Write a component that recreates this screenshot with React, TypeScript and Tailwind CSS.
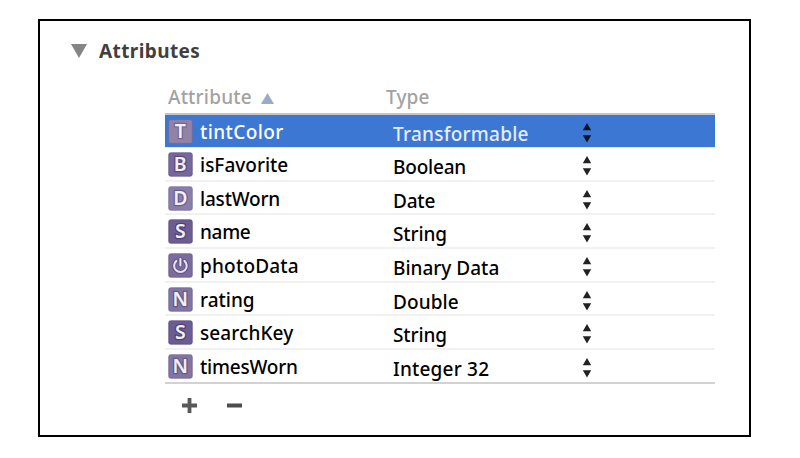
type Row = {
  letter: string;
  name: string;
  type: string;
  tile: string;
  edge: string;
  nameTracking: string;
  typeTracking: string;
};

const rows: Row[] = [
  { letter: "T", name: "tintColor", type: "Transformable", tile: "#9283a6", edge: "#75678f", nameTracking: "tracking-[0.4px]", typeTracking: "tracking-[0.25px]" },
  { letter: "B", name: "isFavorite", type: "Boolean", tile: "#75689a", edge: "#594b80", nameTracking: "tracking-[0px]", typeTracking: "tracking-[-0.2px]" },
  { letter: "D", name: "lastWorn", type: "Date", tile: "#8a7fa8", edge: "#6b5e8e", nameTracking: "tracking-[-0.2px]", typeTracking: "tracking-[-0.2px]" },
  { letter: "S", name: "name", type: "String", tile: "#6b5d91", edge: "#50427a", nameTracking: "tracking-[-0.3px]", typeTracking: "tracking-[-0.1px]" },
  { letter: "", name: "photoData", type: "Binary Data", tile: "#7a6c9b", edge: "#5f5186", nameTracking: "tracking-[0.2px]", typeTracking: "tracking-[0px]" },
  { letter: "N", name: "rating", type: "Double", tile: "#8175a3", edge: "#665989", nameTracking: "tracking-[0px]", typeTracking: "tracking-[0.1px]" },
  { letter: "S", name: "searchKey", type: "String", tile: "#6b5d91", edge: "#50427a", nameTracking: "tracking-[0.1px]", typeTracking: "tracking-[-0.1px]" },
  { letter: "N", name: "timesWorn", type: "Integer 32", tile: "#8175a3", edge: "#665989", nameTracking: "tracking-[-0.2px]", typeTracking: "tracking-[0.2px]" },
];

function Tile({ row }: { row: Row }) {
  return (
    <svg width="25" height="25" viewBox="0 0 25 25" className="block shrink-0 overflow-visible">
      <rect x="0.7" y="0.7" width="23.6" height="23.6" rx="2" fill={row.tile} stroke={row.edge} strokeOpacity="0.6" strokeWidth="1" />
      {row.letter ? (
        <text
          x="12.3"
          y="19.3"
          textAnchor="middle"
          fontSize="19.5"
          fontWeight="600"
          fill="#f1eff6"
          stroke={row.edge}
          strokeWidth="2.6"
          paintOrder="stroke"
        >
          {row.letter}
        </text>
      ) : (
        <g fill="none" strokeLinecap="round">
          <path d="M8.4 7.9A6.3 6.3 0 1 0 16.4 7.9M12.4 5.7V12.4" stroke={row.edge} strokeWidth="4" />
          <path d="M8.4 7.9A6.3 6.3 0 1 0 16.4 7.9M12.4 5.7V12.4" stroke="#e5e2ed" strokeWidth="2.1" />
        </g>
      )}
    </svg>
  );
}

function Stepper({ selected }: { selected: boolean }) {
  return (
    <svg width="10" height="20" viewBox="0 0 10 20" className="block" fill={selected ? "#0b1524" : "#222"}>
      <path d="M5 0L9.2 7.3H0.8ZM5 19.6L0.8 12.3H9.2Z" />
    </svg>
  );
}

export default function App() {
  return (
    <div className="h-[458px] w-[800px] bg-white pl-[38px] pt-[19px] font-['Noto_Sans','Open_Sans',sans-serif] text-[19px]">
      <div className="h-[418px] w-[713px] border-2 border-black bg-white">
        <div className="flex h-[63px] items-start pl-[31px] pt-[17px]">
          <svg width="16" height="14" viewBox="0 0 16 14" className="mt-[6px] block">
            <path d="M0 0H16L8 14Z" fill="#858585" />
          </svg>
          <h2 className="ml-[12px] text-[19px] font-bold leading-[26px] tracking-[0.4px] text-[#404040]">Attributes</h2>
        </div>

        <div className="ml-[125px] w-[550px]">
          <div className="flex h-[30.6px] items-start border-b-2 border-[#c4c4c4] font-medium leading-[26px] text-[#a2a2a2]">
            <div className="flex w-[221px] items-start pl-[3px]">
              <span className="w-[93px] tracking-[0.2px]">Attribute</span>
              <svg width="13" height="11" viewBox="0 0 13 11" className="mt-[9px] block">
                <path d="M6.5 0L13 11H0Z" fill="#9aabc7" />
              </svg>
            </div>
            <span className="tracking-[0.1px]">Type</span>
          </div>

          {rows.map((row, i) => (
            <div
              key={row.name}
              className={`flex items-start font-medium ${
                i === 0
                  ? "h-[33.6px] border-b border-[#e2eafa] bg-[#3c77d4] bg-clip-padding text-white"
                  : i === rows.length - 1
                    ? "h-[34.6px] border-b-2 border-[#d2d2d2] text-black"
                    : "h-[33.6px] border-b-2 border-[#f1f1f1] text-black"
              }`}
            >
              <div className="flex w-[228px] items-start pl-[3px] pt-[4px]">
                <Tile row={row} />
                <span className={`ml-[7px] leading-[26px] ${row.nameTracking}`}>{row.name}</span>
              </div>
              <span className={`w-[189px] pt-[6px] leading-[26px] ${row.typeTracking} ${i === 0 ? "text-[#e6edfa]" : ""}`}>{row.type}</span>
              <div className="pt-[8px]">
                <Stepper selected={i === 0} />
              </div>
            </div>
          ))}

          <div className="flex items-center gap-[30px] pl-[17px] pt-[14px]">
            <svg width="15" height="15" viewBox="0 0 15 15" className="block">
              <path d="M5.6 0H9.4V5.6H15V9.4H9.4V15H5.6V9.4H0V5.6H5.6Z" fill="#595959" />
            </svg>
            <svg width="15" height="15" viewBox="0 0 15 15" className="block">
              <path d="M0 5.5H15V9.5H0Z" fill="#4c4c4c" />
            </svg>
          </div>
        </div>
      </div>
    </div>
  );
}
